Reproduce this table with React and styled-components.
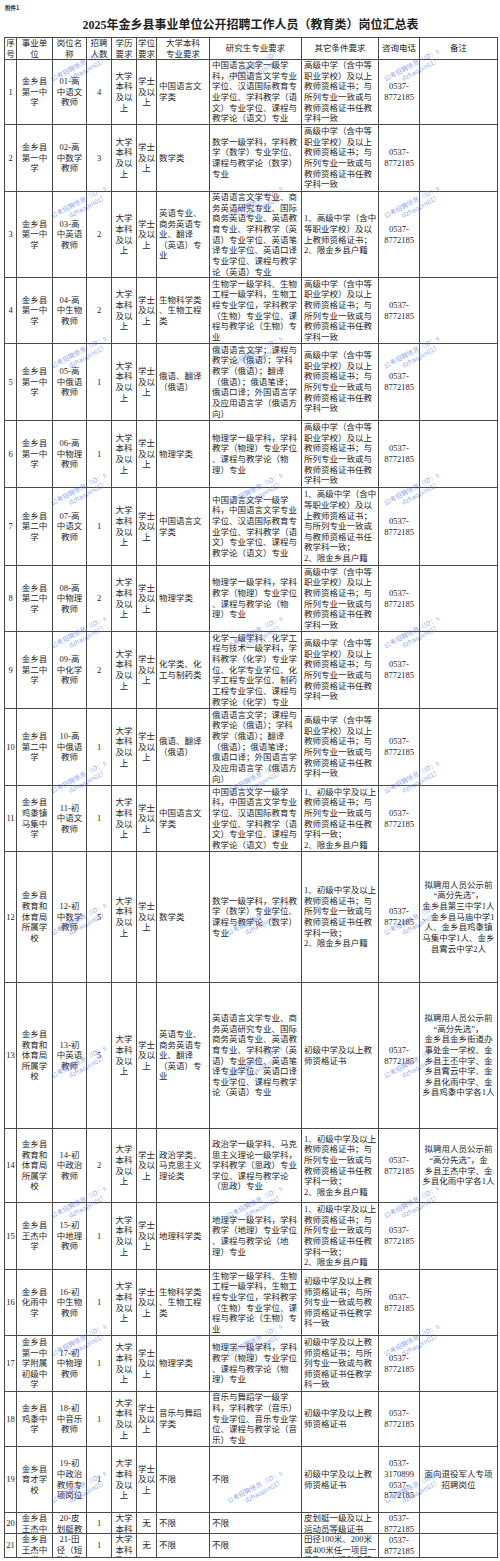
import React from 'react';
import styled, { createGlobalStyle } from 'styled-components';

const Global = createGlobalStyle`
  html, body { margin: 0; padding: 0; background: #fff; overflow: hidden; }
  body { font-family: "Liberation Serif", "Noto Sans CJK SC", serif; color: #262626; }
`;

const COLS = '12px 36px 34px 25px 25px 20px 53px 92px 77px 41px 78px';
const LINE = '#4a4a4a';

const Page = styled.div`
  position: relative;
  width: 500px;
  height: 1561px;
  overflow: hidden;
  box-sizing: border-box;
  padding: 0 3px 0 4px;
`;

const Attachment = styled.div`
  height: 14px;
  font-family: "Noto Sans CJK SC", sans-serif;
  font-size: 5.5px;
  font-weight: 700;
  line-height: 17px;
  padding-left: 1px;
`;

const Title = styled.h1`
  margin: 0;
  height: 23px;
  line-height: 23px;
  text-align: center;
  font-family: "Liberation Serif", "Noto Sans CJK SC", serif;
  font-size: 12px;
  font-weight: 700;
  color: #1e1e1e;
`;

const Sheet = styled.div`
  width: 493px;
  border-left: 1px solid ${LINE};
  border-top: 1px solid ${LINE};
`;

const Row = styled.div`
  display: grid;
  grid-template-columns: ${COLS};
  grid-template-rows: ${(p) => p.$h}px;
  height: ${(p) => p.$h}px;
`;

const Cell = styled.div`
  box-sizing: border-box;
  border-right: 1px solid ${LINE};
  border-bottom: 1px solid ${LINE};
  display: flex;
  align-items: safe center;
  justify-content: ${(p) => (p.$left ? 'flex-start' : 'center')};
  text-align: ${(p) => (p.$left ? 'left' : 'center')};
  padding-left: ${(p) => (p.$left ? '2px' : '0')};
  overflow: hidden;
  white-space: pre;
  font-size: 8.5px;
  line-height: 10.65px;
`;

const Watermark = styled.div`
  position: absolute;
  left: ${(p) => p.$x}px;
  top: ${(p) => p.$y}px;
  transform: translate(-50%, -50%) rotate(-28deg);
  font-family: "Noto Sans CJK SC", sans-serif;
  font-size: 6.5px;
  line-height: 8px;
  color: rgba(70, 110, 225, 0.62);
  white-space: pre;
  pointer-events: none;
`;

const WaterLine = styled.div`
  padding-left: ${(p) => p.$indent || 0}px;
`;

const EDU = '大学\n本科\n及以\n上';
const DEG = '学士\n及以\n上';
const TEL = '0537-\n8772185';

const OTHER_HIGH = '高级中学（含中等\n职业学校）及以上\n教师资格证书；与\n所列专业一致或与\n教师资格证书任教\n学科一致';
const OTHER_HIGH2 = '1、高级中学（含中\n等职业学校）及以\n上教师资格证书；\n2、限金乡县户籍';
const OTHER_HIGH3 = '1、高级中学（含中\n等职业学校）及以\n上教师资格证书；\n与所列专业一致或\n与教师资格证书任\n教学科一致；\n2、限金乡县户籍';
const OTHER_MID = '1、初级中学及以上\n教师资格证书；与\n所列专业一致或与\n教师资格证书任教\n学科一致；\n2、限金乡县户籍';
const OTHER_MID2 = '初级中学及以上教\n师资格证书；与所\n列专业一致或与教\n师资格证书任教学\n科一致';
const OTHER_MID3 = '初级中学及以上教\n师资格证书';

const G_CHN = '中国语言文学一级学\n科，中国语言文学专业\n学位、汉语国际教育专\n业学位、学科教学（语\n文）专业学位、课程与\n教学论（语文）专业';
const G_MATH = '数学一级学科，学科教\n学（数学）专业学位、\n课程与教学论（数学）\n专业';
const G_ENG = '英语语言文学专业、商\n务英语研究专业、国际\n商务英语专业、英语教\n育专业、学科教学（英\n语）专业学位、英语笔\n译专业学位、英语口译\n专业学位、课程与教学\n论（英语）专业';
const G_BIO = '生物学一级学科、生物\n工程一级学科，生物工\n程专业学位，学科教学\n（生物）专业学位、课\n程与教学论（生物）专\n业';
const G_RUS = '俄语语言文学；课程与\n教学论（俄语）；学科\n教学（俄语）；翻译\n（俄语）；俄语笔译；\n俄语口译；外国语言学\n及应用语言学（俄语方\n向）';
const G_PHY = '物理学一级学科，学科\n教学（物理）专业学位\n、课程与教学论（物\n理）专业';

const M_CHN = '中国语言文\n学类';
const M_ENG = '英语专业、\n商务英语专\n业、翻译\n（英语）专\n业';
const M_BIO = '生物科学类\n、生物工程\n类';
const M_RUS = '俄语、翻译\n（俄语）';

const header = ['序\n号', '事业单\n位', '岗位名\n称', '招聘\n人数', '学历\n要求', '学位\n要求', '大学本科\n专业要求', '研究生专业要求', '其它条件要求', '咨询电话', '备注'];

const rows = [
  { h: 65, no: '1', unit: '金乡县\n第一中\n学', post: '01-高\n中语文\n教师', num: '4', major: M_CHN, grad: G_CHN, other: OTHER_HIGH },
  { h: 67, no: '2', unit: '金乡县\n第一中\n学', post: '02-高\n中数学\n教师', num: '3', major: '数学类', grad: G_MATH, other: OTHER_HIGH },
  { h: 86, no: '3', unit: '金乡县\n第一中\n学', post: '03-高\n中英语\n教师', num: '2', major: M_ENG, grad: G_ENG, other: OTHER_HIGH2 },
  { h: 66, no: '4', unit: '金乡县\n第一中\n学', post: '04-高\n中生物\n教师', num: '2', major: M_BIO, grad: G_BIO, other: OTHER_HIGH },
  { h: 77, no: '5', unit: '金乡县\n第一中\n学', post: '05-高\n中俄语\n教师', num: '1', major: M_RUS, grad: G_RUS, other: OTHER_HIGH },
  { h: 67, no: '6', unit: '金乡县\n第一中\n学', post: '06-高\n中物理\n教师', num: '1', major: '物理学类', grad: G_PHY, other: OTHER_HIGH },
  { h: 78, no: '7', unit: '金乡县\n第二中\n学', post: '07-高\n中语文\n教师', num: '1', major: M_CHN, grad: G_CHN, other: OTHER_HIGH3 },
  { h: 66, no: '8', unit: '金乡县\n第二中\n学', post: '08-高\n中物理\n教师', num: '2', major: '物理学类', grad: G_PHY, other: OTHER_HIGH },
  { h: 77, no: '9', unit: '金乡县\n第二中\n学', post: '09-高\n中化学\n教师', num: '2', major: '化学类、化\n工与制药类', grad: '化学一级学科、化学工\n程与技术一级学科，学\n科教学（化学）专业学\n位、化学专业学位、化\n学工程专业学位、制药\n工程专业学位、课程与\n教学论（化学）专业', other: OTHER_HIGH },
  { h: 77, no: '10', unit: '金乡县\n第二中\n学', post: '10-高\n中俄语\n教师', num: '1', major: M_RUS, grad: G_RUS, other: OTHER_HIGH },
  { h: 66, no: '11', unit: '金乡县\n鸡黍镇\n马集中\n学', post: '11-初\n中语文\n教师', num: '1', major: M_CHN, grad: G_CHN, other: OTHER_MID },
  { h: 131, no: '12', unit: '金乡县\n教育和\n体育局\n所属学\n校', post: '12-初\n中数学\n教师', num: '5', major: '数学类', grad: G_MATH, other: OTHER_MID, note: '拟聘用人员公示前\n“高分先选”，\n金乡县第三中学1人\n、金乡县马庙中学1\n人、金乡县鸡黍镇\n马集中学1人、金乡\n县霄云中学2人' },
  { h: 146, no: '13', unit: '金乡县\n教育和\n体育局\n所属学\n校', post: '13-初\n中英语\n教师', num: '5', major: M_ENG, grad: G_ENG, other: OTHER_MID3, note: '拟聘用人员公示前\n“高分先选”，\n金乡县金乡街道办\n事处金一学校、金\n乡县王丕中学、金\n乡县霄云中学、金\n乡县化雨中学、金\n乡县鸡黍中学各1人' },
  { h: 74, no: '14', unit: '金乡县\n教育和\n体育局\n所属学\n校', post: '14-初\n中政治\n教师', num: '2', major: '政治学类、\n马克思主义\n理论类', grad: '政治学一级学科、马克\n思主义理论一级学科，\n学科教学（思政）专业\n学位、课程与教学论\n（思政）专业', other: OTHER_MID, note: '拟聘用人员公示前\n“高分先选”，金\n乡县王杰中学、金\n乡县化雨中学各1人' },
  { h: 67, no: '15', unit: '金乡县\n王杰中\n学', post: '15-初\n中地理\n教师', num: '1', major: '地理科学类', grad: '地理学一级学科，学科\n教学（地理）专业学位\n、课程与教学论（地\n理）专业', other: OTHER_MID },
  { h: 66, no: '16', unit: '金乡县\n化雨中\n学', post: '16-初\n中生物\n教师', num: '1', major: M_BIO, grad: G_BIO, other: OTHER_MID2 },
  { h: 56, no: '17', unit: '金乡县\n第一中\n学附属\n初级中\n学', post: '17-初\n中物理\n教师', num: '1', major: '物理学类', grad: G_PHY, other: OTHER_MID2 },
  { h: 55, no: '18', unit: '金乡县\n鸡黍中\n学', post: '18-初\n中音乐\n教师', num: '1', major: '音乐与舞蹈\n学类', grad: '音乐与舞蹈学一级学\n科，学科教学（音乐）\n专业学位、音乐专业学\n位、课程与教学论（音\n乐）专业', other: OTHER_MID3 },
  { h: 66, no: '19', unit: '金乡县\n育才学\n校', post: '19-初\n中政治\n教师专\n项岗位', num: '1', major: '不限', grad: '不限', other: OTHER_MID3, tel: '0537-\n3170899\n0537-\n8772185', note: '面向退役军人专项\n招聘岗位' },
  { h: 21, no: '20', unit: '金乡县\n王杰中\n学', post: '20-皮\n划艇教\n练', num: '1', deg: '无', major: '不限', grad: '不限', other: '皮划艇一级及以上\n运动员等级证书' },
  { h: 24, no: '21', unit: '金乡县\n王杰中\n学', post: '21-田\n径（短\n跑）教\n练', num: '1', deg: '无', major: '不限', grad: '不限', other: '田径100米、200米\n或400米任一项目一\n级及以上运动员等\n级证书' },
];

const markYs = [68, 205, 355, 492, 635, 780, 922, 1065, 1205, 1343, 1490];
const markXs = [80, 256, 413];

export default function App() {
  return (
    <Page>
      <Global />
      <Attachment>附件1</Attachment>
      <Title>2025年金乡县事业单位公开招聘工作人员（教育类）岗位汇总表</Title>
      <Sheet>
        <Row $h={22}>
          {header.map((t, i) => (
            <Cell key={i}>{t}</Cell>
          ))}
        </Row>
        {rows.map((r) => (
          <Row key={r.no} $h={r.h}>
            <Cell>{r.no}</Cell>
            <Cell>{r.unit}</Cell>
            <Cell>{r.post}</Cell>
            <Cell>{r.num}</Cell>
            <Cell>{EDU}</Cell>
            <Cell>{r.deg || DEG}</Cell>
            <Cell $left>{r.major}</Cell>
            <Cell $left>{r.grad}</Cell>
            <Cell $left>{r.other}</Cell>
            <Cell>{r.tel || TEL}</Cell>
            <Cell>{r.note || ''}</Cell>
          </Row>
        ))}
      </Sheet>
      {markYs.map((y) =>
        markXs.map((x) => (
          <Watermark key={`${x}-${y}`} $x={x} $y={y}>
            <WaterLine>公考招聘信息（ID：s</WaterLine>
            <WaterLine $indent={16}>dzhaopin01）</WaterLine>
          </Watermark>
        ))
      )}
    </Page>
  );
}
